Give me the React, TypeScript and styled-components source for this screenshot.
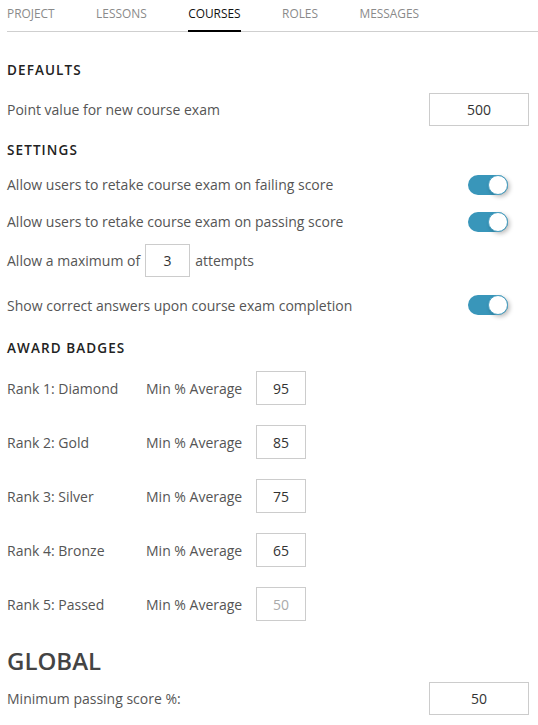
import React from "react";
import styled, { createGlobalStyle } from "styled-components";

const Global = createGlobalStyle`
  html, body { margin: 0; padding: 0; background: #fff; }
  body { font-family: "Open Sans", "Noto Sans", sans-serif; color: #555; }
  * { box-sizing: border-box; }
`;

const Page = styled.div`
  width: 538px;
  display: flex;
  flex-direction: column;
`;

const TabBar = styled.div`
  display: flex;
  height: 32px;
  margin-left: 7px;
  border-bottom: 1px solid #cfcfcf;
`;

const Tab = styled.div<{ $active?: boolean }>`
  height: 32px;
  margin-bottom: -1px;
  margin-right: 41.5px;
  padding-top: 5px;
  font-size: 11.9px;
  line-height: 16px;
  text-transform: uppercase;
  color: ${(p) => (p.$active ? "#111" : "#8a8a8a")};
  border-bottom: 2px solid ${(p) => (p.$active ? "#000" : "transparent")};
`;

const Content = styled.div`
  display: flex;
  flex-direction: column;
  padding: 0 9px 0 7px;
`;

const Heading = styled.div<{ $top: number }>`
  margin-top: ${(p) => p.$top}px;
  height: 20px;
  line-height: 20px;
  font-size: 13.5px;
  font-weight: 600;
  letter-spacing: 1.1px;
  color: #222;
`;

const BigHeading = styled.div<{ $top: number }>`
  margin-top: ${(p) => p.$top}px;
  height: 32px;
  line-height: 32px;
  font-size: 24px;
  font-weight: 600;
  color: #444;
`;

const Row = styled.div<{ $top: number; $h: number }>`
  margin-top: ${(p) => p.$top}px;
  height: ${(p) => p.$h}px;
  display: flex;
  align-items: center;
  justify-content: space-between;
  font-size: 14px;
  color: #555;
`;

const InlineRow = styled.div<{ $top: number }>`
  margin-top: ${(p) => p.$top}px;
  height: 33px;
  display: flex;
  align-items: center;
  gap: 5px;
  font-size: 14px;
  color: #555;
`;

const Input = styled.div<{ $w: number; $h?: number; $disabled?: boolean }>`
  width: ${(p) => p.$w}px;
  height: ${(p) => p.$h ?? 33}px;
  border: 1px solid #cccccc;
  display: flex;
  align-items: center;
  justify-content: center;
  font-size: 14px;
  color: ${(p) => (p.$disabled ? "#aaa" : "#333")};
  background: #fff;
`;

const Toggle = styled.div`
  position: relative;
  width: 40px;
  height: 20px;
  margin-right: 21px;
  border-radius: 10px;
  background: #3996ba;
`;

const Knob = styled.div`
  position: absolute;
  right: 0;
  top: 0;
  width: 20px;
  height: 20px;
  border-radius: 50%;
  background: #fff;
  border: 1px solid #4aa0c2;
  box-shadow: 2px 2px 4px rgba(0, 0, 0, 0.25);
`;

const RankRow = styled.div<{ $top: number }>`
  margin-top: ${(p) => p.$top}px;
  height: 34px;
  display: grid;
  grid-template-columns: 139px 110px 50px;
  align-items: center;
  font-size: 14px;
  color: #555;
`;

const Switch = () => (
  <Toggle>
    <Knob />
  </Toggle>
);

const ranks = [
  { name: "Rank 1: Diamond", v: "95" },
  { name: "Rank 2: Gold", v: "85" },
  { name: "Rank 3: Silver", v: "75" },
  { name: "Rank 4: Bronze", v: "65" },
  { name: "Rank 5: Passed", v: "50", disabled: true },
];

export default function App() {
  return (
    <Page>
      <Global />
      <TabBar>
        <Tab>Project</Tab>
        <Tab>Lessons</Tab>
        <Tab $active>Courses</Tab>
        <Tab>Roles</Tab>
        <Tab>Messages</Tab>
      </TabBar>
      <Content>
        <Heading $top={28}>DEFAULTS</Heading>
        <Row $top={13} $h={33}>
          <span>Point value for new course exam</span>
          <Input $w={100}>500</Input>
        </Row>
        <Heading $top={14}>SETTINGS</Heading>
        <Row $top={6} $h={37}>
          <span>Allow users to retake course exam on failing score</span>
          <Switch />
        </Row>
        <Row $top={0} $h={37}>
          <span>Allow users to retake course exam on passing score</span>
          <Switch />
        </Row>
        <InlineRow $top={4}>
          <span>Allow a maximum of</span>
          <Input $w={45}>3</Input>
          <span>attempts</span>
        </InlineRow>
        <Row $top={18} $h={20}>
          <span>Show correct answers upon course exam completion</span>
          <Switch />
        </Row>
        <Heading $top={23}>AWARD BADGES</Heading>
        {ranks.map((r, i) => (
          <RankRow key={r.name} $top={i === 0 ? 13 : 20}>
            <span>{r.name}</span>
            <span>Min % Average</span>
            <Input $w={50} $h={34} $disabled={r.disabled}>
              {r.v}
            </Input>
          </RankRow>
        ))}
        <BigHeading $top={24}>GLOBAL</BigHeading>
        <Row $top={5} $h={33}>
          <span>Minimum passing score %:</span>
          <Input $w={100}>50</Input>
        </Row>
      </Content>
    </Page>
  );
}
